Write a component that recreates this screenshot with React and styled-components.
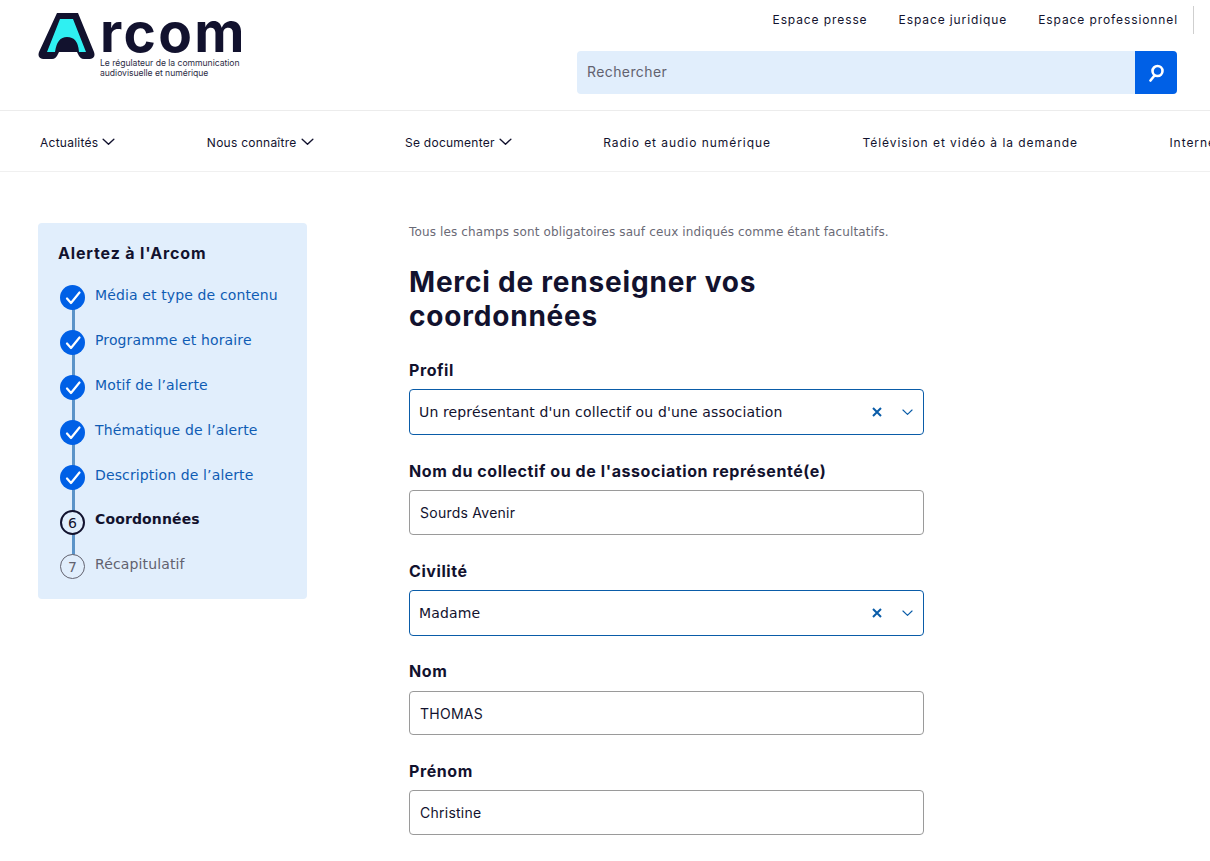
import styled, { createGlobalStyle } from "styled-components";

const GlobalStyle = createGlobalStyle`
  html, body {
    margin: 0;
    padding: 0;
    background: #fff;
    overflow: hidden;
  }
  * { box-sizing: border-box; }
`;

const display = `"Inter", "Liberation Sans", sans-serif`;
const body = `"DejaVu Sans", "Liberation Sans", sans-serif`;

const Page = styled.div`
  width: 1210px;
  height: 861px;
  overflow: hidden;
  color: #12122e;
  font-family: ${display};
`;

const Header = styled.header`
  height: 111px;
  border-bottom: 1px solid #ececec;
  display: flex;
  justify-content: space-between;
  padding: 12px 0 0 38px;
`;

const Logo = styled.div`
  display: flex;
  gap: 4px;
  align-items: flex-start;
`;

const LogoWords = styled.div`
  display: flex;
  flex-direction: column;
`;

const LogoName = styled.div`
  font-size: 55px;
  font-weight: 700;
  line-height: 40px;
  height: 46px;
  letter-spacing: 2.4px;
  color: #12122e;
`;

const LogoTag = styled.div`
  font-size: 8.6px;
  line-height: 10px;
  letter-spacing: -0.03px;
  color: #2c2c44;
`;

const HeaderRight = styled.div`
  width: 633px;
  display: flex;
  flex-direction: column;
  margin-top: -7px;
`;

const TopLinks = styled.div`
  height: 28px;
  display: flex;
  align-items: center;
  justify-content: flex-end;
  gap: 31px;
  padding-right: 32px;
  font-size: 12px;
  letter-spacing: 0.9px;
`;

const TopLink = styled.span`
  ${(p) => p.$divided && `
    position: relative;
    &::after {
      content: "";
      position: absolute;
      right: -16px;
      top: -6px;
      width: 1px;
      height: 28px;
      background: #cfcfcf;
    }
  `}
`;

const Search = styled.div`
  width: 600px;
  height: 43px;
  margin-top: 18px;
  display: flex;
  background: #e1eefc;
  border-radius: 4px;
  overflow: hidden;
`;

const SearchText = styled.div`
  flex: 1;
  padding: 0 0 2px 10px;
  display: flex;
  align-items: center;
  font-size: 14px;
  letter-spacing: 0.4px;
  color: #62626f;
`;

const SearchButton = styled.div`
  width: 42px;
  background: #0060e6;
  display: flex;
  align-items: center;
  justify-content: center;
`;

const Nav = styled.nav`
  height: 61px;
  border-bottom: 1px solid #f0f0f0;
  display: flex;
  align-items: center;
  gap: 91.5px;
  padding: 2px 0 0 40px;
  overflow: hidden;
  white-space: nowrap;
  font-size: 12px;
`;

const NavItem = styled.span`
  display: flex;
  align-items: center;
  gap: 4px;
  flex: none;
  letter-spacing: ${(p) => (p.$wide ? "0.95px" : "0.25px")};
`;

const Content = styled.main`
  display: flex;
  align-items: flex-start;
  padding: 51px 0 0 38px;
`;

const Sidebar = styled.aside`
  width: 269px;
  height: 376px;
  flex: none;
  background: #e1eefc;
  border-radius: 4px;
  padding: 18px 20px 0 20px;
`;

const SideTitle = styled.div`
  font-size: 16px;
  font-weight: 700;
  line-height: 24px;
  letter-spacing: 0.85px;
  margin-bottom: 18px;
`;

const Steps = styled.ol`
  list-style: none;
  margin: 0;
  padding: 0 0 0 2px;
`;

const StepRow = styled.li`
  position: relative;
  height: 45px;
  display: flex;
  gap: 10px;
  font-family: ${body};
  font-size: 14px;
  line-height: 20px;
  letter-spacing: 0.13px;
  font-weight: ${(p) => (p.$kind === "current" ? 700 : 400)};
  color: ${(p) =>
    p.$kind === "done" ? "#0f5cb4" : p.$kind === "current" ? "#12122e" : "#62626f"};
  &:not(:last-child)::after {
    content: "";
    position: absolute;
    left: 12px;
    top: 20px;
    width: 3px;
    height: 35px;
    background: #5b93c8;
  }
`;

const StepLabel = styled.span`
  padding-top: ${(p) => (p.$kind === "done" ? 2 : 1)}px;
`;

const StepMark = styled.span`
  position: relative;
  z-index: 1;
  width: 25px;
  height: 25px;
  margin-top: ${(p) => (p.$kind === "todo" ? 1 : 2)}px;
  flex: none;
  border-radius: 50%;
  display: flex;
  align-items: center;
  justify-content: center;
  font-size: 14px;
  font-weight: 400;
  background: ${(p) => (p.$kind === "done" ? "#0060e6" : "#e1eefc")};
  border: ${(p) =>
    p.$kind === "current"
      ? "2px solid #12122e"
      : p.$kind === "todo"
      ? "1px solid #62626f"
      : "none"};
  color: ${(p) => (p.$kind === "current" ? "#12122e" : "#62626f")};
`;

const FormColumn = styled.section`
  width: 515px;
  margin-left: 102px;
`;

const Note = styled.p`
  margin: 1px 0 0;
  font-family: ${body};
  font-size: 12px;
  line-height: 16px;
  letter-spacing: 0.13px;
  color: #6a6a76;
`;

const Heading = styled.h1`
  margin: 25px 0 25px;
  width: 400px;
  font-size: 28px;
  font-weight: 700;
  line-height: 34px;
  letter-spacing: 0.8px;
`;

const Field = styled.div`
  margin-bottom: ${(p) => p.$gap}px;
`;

const Label = styled.label`
  display: block;
  font-size: 16px;
  font-weight: 700;
  line-height: 24px;
  letter-spacing: 0.58px;
  margin-bottom: ${(p) => p.$gap || 7}px;
`;

const SelectBox = styled.div`
  height: 46px;
  border: 1px solid #0a5ca8;
  border-radius: 4px;
  display: flex;
  align-items: center;
  padding: 0 10px 0 9px;
  font-family: ${body};
  font-size: 14px;
  letter-spacing: 0.14px;
  color: #12122e;
`;

const SelectValue = styled.span`
  flex: 1;
`;

const SelectIcons = styled.span`
  display: flex;
  align-items: center;
  gap: 20px;
`;

const InputBox = styled.div`
  height: ${(p) => p.$height}px;
  border: 1px solid #9a9a9a;
  border-radius: 4px;
  display: flex;
  align-items: center;
  padding-left: 10px;
  font-size: 14px;
  letter-spacing: 0.25px;
  color: #12122e;
`;

const LogoMark = () => (
  <svg width="58" height="49" viewBox="38 12 58 49">
    <path
      d="M57 13 H78 L94 52 Q96 58 90 59 H84 Q80 59 78 54 L77 52 H59 L58 54 Q56 59 52 59 H43 Q37 58 39 52 Z"
      fill="#12122e"
    />
    <path d="M60 19 H73 L86 52 H79 Q78 37 67 37 Q57 37 55 52 H47 Z" fill="#2ff0f2" />
  </svg>
);

const SearchIcon = () => (
  <svg width="18" height="18" viewBox="0 0 18 18" fill="none" stroke="#fff" strokeWidth="2.6">
    <circle cx="10.5" cy="7" r="5" />
    <path d="M7.5 11.5 L3.5 16.5" strokeLinecap="round" />
  </svg>
);

const Chevron = ({ size, color }) => (
  <svg width={size} height={size * 0.6} viewBox="0 0 13 8" fill="none" stroke={color} strokeWidth="1.4">
    <path d="M1 1.2 L6.5 6.5 L12 1.2" strokeLinecap="round" strokeLinejoin="round" />
  </svg>
);

const ClearIcon = () => (
  <svg width="10" height="10" viewBox="0 0 10 10" fill="none" stroke="#0a5ca8" strokeWidth="2">
    <path d="M1 1 L9 9 M9 1 L1 9" />
  </svg>
);

const CheckIcon = () => (
  <svg width="16" height="14" viewBox="0 0 16 14" fill="none" stroke="#fff" strokeWidth="2.2">
    <path d="M2 7.5 L6 12 L14.5 1.5" strokeLinecap="round" strokeLinejoin="round" />
  </svg>
);

const steps = [
  { label: "Média et type de contenu", kind: "done" },
  { label: "Programme et horaire", kind: "done" },
  { label: "Motif de l’alerte", kind: "done" },
  { label: "Thématique de l’alerte", kind: "done" },
  { label: "Description de l’alerte", kind: "done" },
  { label: "Coordonnées", kind: "current", num: 6 },
  { label: "Récapitulatif", kind: "todo", num: 7 },
];

const navItems = [
  { label: "Actualités", menu: true },
  { label: "Nous connaître", menu: true },
  { label: "Se documenter", menu: true },
  { label: "Radio et audio numérique" },
  { label: "Télévision et vidéo à la demande" },
  { label: "Internet et réseaux sociaux" },
];

const Select = ({ label, value, gap }) => (
  <Field $gap={gap}>
    <Label>{label}</Label>
    <SelectBox>
      <SelectValue>{value}</SelectValue>
      <SelectIcons>
        <ClearIcon />
        <Chevron size={11} color="#0a5ca8" />
      </SelectIcons>
    </SelectBox>
  </Field>
);

const Input = ({ label, value, gap, height = 45, labelGap }) => (
  <Field $gap={gap}>
    <Label $gap={labelGap}>{label}</Label>
    <InputBox $height={height}>{value}</InputBox>
  </Field>
);

const App = () => {
  return (
    <Page>
      <GlobalStyle />
      <Header>
        <Logo>
          <LogoMark />
          <LogoWords>
            <LogoName>rcom</LogoName>
            <LogoTag>
              Le régulateur de la communication
              <br />
              audiovisuelle et numérique
            </LogoTag>
          </LogoWords>
        </Logo>
        <HeaderRight>
          <TopLinks>
            <TopLink>Espace presse</TopLink>
            <TopLink>Espace juridique</TopLink>
            <TopLink $divided>Espace professionnel</TopLink>
          </TopLinks>
          <Search>
            <SearchText>Rechercher</SearchText>
            <SearchButton>
              <SearchIcon />
            </SearchButton>
          </Search>
        </HeaderRight>
      </Header>
      <Nav>
        {navItems.map((item) => (
          <NavItem key={item.label} $wide={!item.menu}>
            {item.label}
            {item.menu && <Chevron size={13} color="#12122e" />}
          </NavItem>
        ))}
      </Nav>
      <Content>
        <Sidebar>
          <SideTitle>Alertez à l'Arcom</SideTitle>
          <Steps>
            {steps.map((step) => (
              <StepRow key={step.label} $kind={step.kind}>
                <StepMark $kind={step.kind}>
                  {step.kind === "done" ? <CheckIcon /> : step.num}
                </StepMark>
                <StepLabel $kind={step.kind}>{step.label}</StepLabel>
              </StepRow>
            ))}
          </Steps>
        </Sidebar>
        <FormColumn>
          <Note>Tous les champs sont obligatoires sauf ceux indiqués comme étant facultatifs.</Note>
          <Heading>Merci de renseigner vos coordonnées</Heading>
          <Select
            label="Profil"
            value="Un représentant d'un collectif ou d'une association"
            gap={24}
          />
          <Input label="Nom du collectif ou de l'association représenté(e)" value="Sourds Avenir" gap={24} />
          <Select label="Civilité" value="Madame" gap={23} />
          <Input label="Nom" value="THOMAS" gap={24} height={44} labelGap={8} />
          <Input label="Prénom" value="Christine" gap={0} />
        </FormColumn>
      </Content>
    </Page>
  );
};

export default App;
